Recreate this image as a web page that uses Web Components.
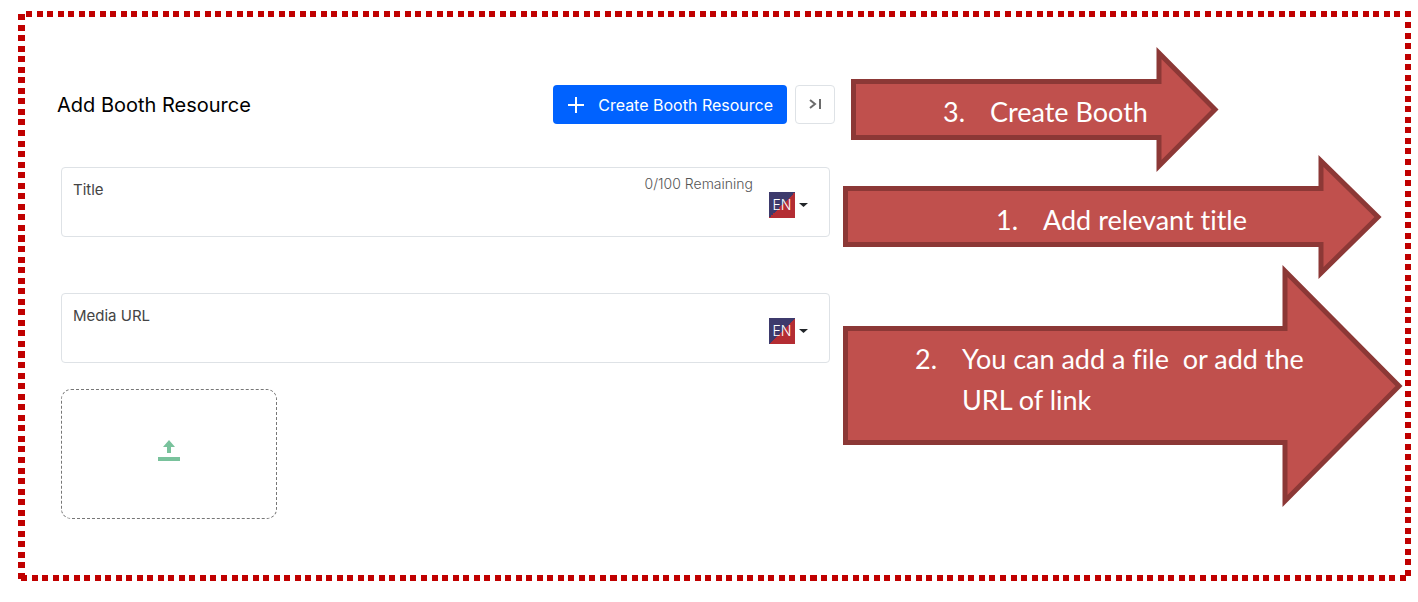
<!DOCTYPE html>
<html lang="en">
<head>
<meta charset="UTF-8">
<meta name="viewport" content="width=device-width, initial-scale=1">
<title>Add Booth Resource</title>
<style>
    body {
        margin: 0;
        background: #fff;
        font-family: Inter, "Open Sans", sans-serif;
    }
</style>
</head>
<body>
<dotted-frame>
    <resource-form heading="Add Booth Resource">
        <text-field label="Title" hint="0/100 Remaining" maxlength="100"></text-field>
        <text-field label="Media URL" type="url"></text-field>
        <upload-box></upload-box>
    </resource-form>
    <step-list slot="notes">
        <step-arrow class="create" number="3." width="368" height="125" head="308" shaft-top="32" shaft-bottom="93">Create Booth</step-arrow>
        <step-arrow class="title" number="1." width="539" height="124" head="478" shaft-top="31" shaft-bottom="92">Add relevant title</step-arrow>
        <step-arrow class="media" number="2." width="560" height="242" head="442" shaft-top="61" shaft-bottom="180">You can add a file&nbsp; or add the URL of link</step-arrow>
    </step-list>
</dotted-frame>

<script>
class DottedFrame extends HTMLElement {
    connectedCallback() {
        this.attachShadow({ mode: 'open' });
        this.shadowRoot.innerHTML = `
            <style>
                :host {
                    display: grid;
                    grid-template-columns: minmax(0, 778fr) minmax(0, 560fr);
                    column-gap: 8px;
                    align-items: start;
                    position: relative;
                    box-sizing: border-box;
                    margin: 11px 7px 21px 18px;
                    padding: 36px 8px 62px 39px;
                }

                .side {
                    position: absolute;
                    pointer-events: none;
                }

                .side line {
                    stroke: #c00000;
                    shape-rendering: crispEdges;
                }

                .top { left: 8px; top: 0; width: calc(100% - 8px); height: 6px; }
                .bottom { left: 3px; bottom: 0; width: calc(100% - 8px); height: 6px; }
                .left { left: 0; top: 3px; width: 7px; height: calc(100% - 5px); }
                .right { right: 0; top: 11px; width: 6px; height: calc(100% - 16px); }
            </style>
            <svg class="side top" aria-hidden="true"><line x1="0" y1="3" x2="100%" y2="3" stroke-width="6" pathLength="921" stroke-dasharray="4 3"/></svg>
            <svg class="side bottom" aria-hidden="true"><line x1="0" y1="3" x2="100%" y2="3" stroke-width="6" pathLength="921" stroke-dasharray="4 3"/></svg>
            <svg class="side left" aria-hidden="true"><line x1="3.5" y1="0" x2="3.5" y2="100%" stroke-width="7" pathLength="375" stroke-dasharray="4 3"/></svg>
            <svg class="side right" aria-hidden="true"><line x1="3" y1="0" x2="3" y2="100%" stroke-width="6" pathLength="368" stroke-dasharray="4 3"/></svg>
            <slot></slot>
            <slot name="notes"></slot>
        `;
    }
}

class ResourceForm extends HTMLElement {
    connectedCallback() {
        this.attachShadow({ mode: 'open' });
        this.shadowRoot.innerHTML = `
            <style>
                :host {
                    display: block;
                    padding-top: 38px;
                }

                header {
                    display: flex;
                    align-items: center;
                    gap: 8px;
                }

                h1 {
                    flex: 1;
                    margin: 0;
                    font-size: 20px;
                    font-weight: 400;
                    line-height: 28px;
                    color: #000;
                }

                button {
                    display: flex;
                    align-items: center;
                    justify-content: center;
                    box-sizing: border-box;
                    height: 39px;
                    border-radius: 4px;
                    font: 400 16px/22px Inter, "Open Sans", sans-serif;
                    cursor: pointer;
                }

                .create {
                    gap: 14px;
                    padding: 0 14px 0 15px;
                    border: 0;
                    background: #0062ff;
                    color: #fff;
                }

                .collapse {
                    width: 40px;
                    padding: 0 0 2px;
                    border: 1px solid #dee2e6;
                    background: #fff;
                }

                .fields {
                    display: grid;
                    margin: 43px 5px 0 4px;
                }
            </style>
            <header>
                <h1></h1>
                <button class="create" type="button">
                    <svg width="16" height="16" viewBox="0 0 16 16" stroke="#fff" stroke-width="2" aria-hidden="true"><path d="M8 0v16M0 8h16"/></svg>
                    <span>Create Booth Resource</span>
                </button>
                <button class="collapse" type="button" aria-label="Collapse">
                    <svg width="12" height="10" viewBox="0 0 12 10" fill="none" stroke="#6b6b6b" stroke-width="2" aria-hidden="true"><path d="M1 1l5 4-5 4"/><path d="M11 0v10"/></svg>
                </button>
            </header>
            <div class="fields"><slot></slot></div>
        `;
        this.shadowRoot.querySelector('h1').textContent = this.getAttribute('heading');
    }
}

class TextField extends HTMLElement {
    connectedCallback() {
        this.attachShadow({ mode: 'open' });
        const label = this.getAttribute('label');
        this.shadowRoot.innerHTML = `
            <style>
                :host {
                    display: grid;
                    grid-template-columns: 1fr auto auto;
                    column-gap: 16px;
                    box-sizing: border-box;
                    min-height: 70px;
                    margin-bottom: 56px;
                    padding: 7px 21px 7px 11px;
                    border: 1px solid #dee2e6;
                    border-radius: 4px;
                }

                :host([type="url"]) {
                    margin-bottom: 26px;
                }

                label {
                    padding-top: 4px;
                    font-size: 15px;
                    line-height: 22px;
                    color: #444;
                }

                .hint {
                    font-size: 14px;
                    font-weight: 300;
                    line-height: 18px;
                    color: #555;
                }

                input {
                    grid-column: 1 / 3;
                    grid-row: 2;
                    min-width: 0;
                    height: 28px;
                    padding: 0;
                    border: 0;
                    outline: 0;
                    background: transparent;
                    font: 15px/22px Inter, "Open Sans", sans-serif;
                    color: #222;
                }

                .language {
                    grid-column: 3;
                    grid-row: 1 / 3;
                    align-self: start;
                    display: flex;
                    align-items: center;
                    gap: 4px;
                    padding-top: 17px;
                }

                select {
                    appearance: none;
                    width: 26px;
                    height: 26px;
                    padding: 0;
                    border: 0;
                    border-radius: 0;
                    background: linear-gradient(135deg, #3d3a6c 50%, #b42d33 50%);
                    font: 300 14px/26px Inter, "Open Sans", sans-serif;
                    text-align: center;
                    text-align-last: center;
                    color: #fff;
                }
            </style>
            <label for="value">${label}</label>
            <span class="hint">${this.getAttribute('hint') || ''}</span>
            <input id="value" type="${this.getAttribute('type') || 'text'}">
            <span class="language">
                <select aria-label="${label} language"><option>EN</option></select>
                <svg width="9" height="4" viewBox="0 0 9 4" aria-hidden="true"><path d="M0 0h9L4.500 4z" fill="#212529"/></svg>
            </span>
        `;
        if (this.hasAttribute('maxlength')) {
            this.shadowRoot.querySelector('input').maxLength = this.getAttribute('maxlength');
        }
    }
}

class UploadBox extends HTMLElement {
    connectedCallback() {
        this.attachShadow({ mode: 'open' });
        this.shadowRoot.innerHTML = `
            <style>
                :host {
                    display: block;
                    width: 216px;
                }

                label {
                    display: grid;
                    place-items: center;
                    box-sizing: border-box;
                    height: 130px;
                    border: 1px dashed #777;
                    border-radius: 10px;
                    cursor: pointer;
                }

                svg, input {
                    grid-area: 1 / 1;
                }

                svg {
                    margin-bottom: 6px;
                }

                input {
                    width: 100%;
                    height: 100%;
                    opacity: 0;
                }
            </style>
            <label>
                <svg width="22" height="22" viewBox="0 0 22 22" fill="#79c29c" aria-hidden="true"><path d="M11 0l6 7h-4v6H9V7H5z"/><path d="M0 17h22v4H0z"/></svg>
                <input type="file" aria-label="Upload file">
            </label>
        `;
    }
}

class StepList extends HTMLElement {
    connectedCallback() {
        this.attachShadow({ mode: 'open' });
        this.shadowRoot.innerHTML = `
            <style>
                :host {
                    display: flex;
                    flex-direction: column;
                    font-family: Lato, "Open Sans", sans-serif;
                }

                /* the heads of neighbouring arrows reach past each other */
                ::slotted(.create) {
                    margin: 0 184px 0 8px;
                    --indent: 92px;
                    --text-top: 44px;
                }

                ::slotted(.title) {
                    margin: -17px 21px 0 0;
                    --indent: 153px;
                    --text-top: 44px;
                }

                ::slotted(.media) {
                    margin-top: -14px;
                    --indent: 72px;
                    --text-top: 73px;
                }
            </style>
            <slot></slot>
        `;
    }
}

class StepArrow extends HTMLElement {
    connectedCallback() {
        const num = name => Number(this.getAttribute(name));
        const w = num('width');
        const h = num('height');
        const head = num('head');
        const half = 2.5; // half of the outline
        const tip = w - 4;
        const top = num('shaft-top') + half;
        const bottom = num('shaft-bottom') - half;
        const points = [
            [half, top], [head, top], [head, 6], [tip, h / 2],
            [head, h - 6], [head, bottom], [half, bottom]
        ];

        this.attachShadow({ mode: 'open' });
        this.shadowRoot.innerHTML = `
            <style>
                :host {
                    display: grid;
                    height: ${h}px;
                }

                svg, .text {
                    grid-area: 1 / 1;
                }

                svg {
                    width: 100%;
                    height: 100%;
                    overflow: visible;
                }

                polygon {
                    fill: #c0504d;
                    stroke: #8c3836;
                    stroke-width: 5;
                    stroke-miterlimit: 10;
                    vector-effect: non-scaling-stroke;
                }

                .text {
                    display: grid;
                    grid-template-columns: 31px 1fr;
                    column-gap: 16px;
                    align-content: start;
                    padding: var(--text-top) 60px 0 var(--indent);
                    font-size: 27px;
                    font-variant-ligatures: none;
                    line-height: 41px;
                    color: #fff;
                }
            </style>
            <svg viewBox="0 0 ${w} ${h}" preserveAspectRatio="none" aria-hidden="true"><polygon points="${points.join(' ')}"/></svg>
            <div class="text"><span>${this.getAttribute('number')}</span><span><slot></slot></span></div>
        `;
    }
}

customElements.define('dotted-frame', DottedFrame);
customElements.define('resource-form', ResourceForm);
customElements.define('text-field', TextField);
customElements.define('upload-box', UploadBox);
customElements.define('step-list', StepList);
customElements.define('step-arrow', StepArrow);
</script>
</body>
</html>
